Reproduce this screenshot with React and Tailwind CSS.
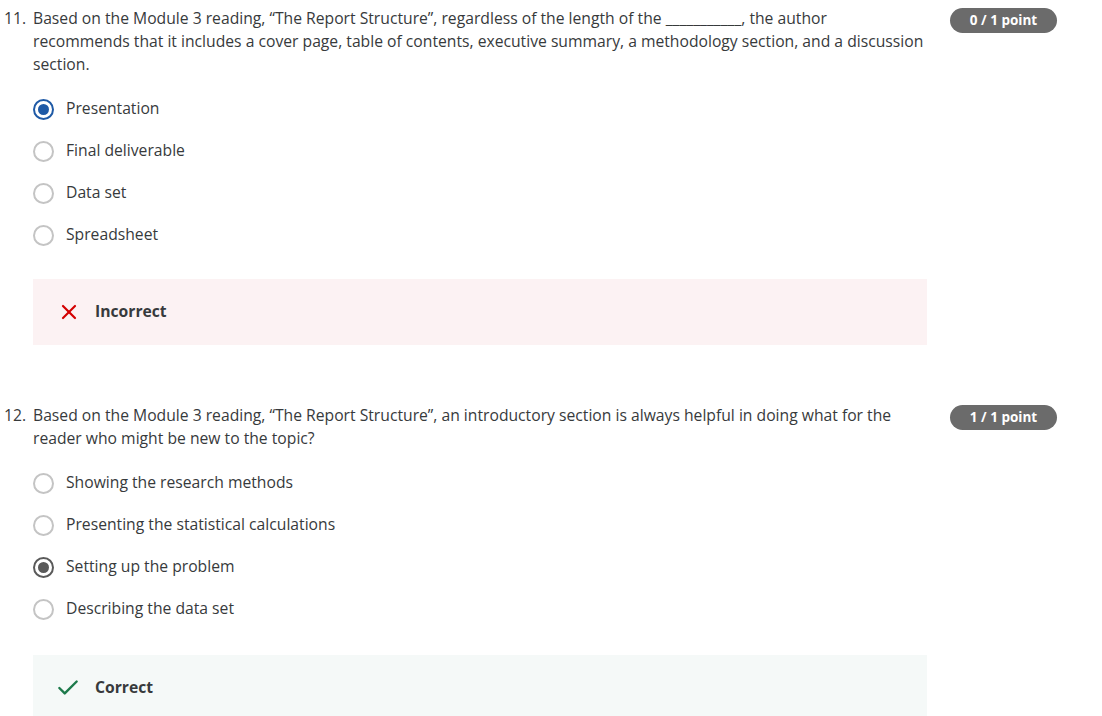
import { X, Check } from "lucide-react";

const questions = [
  {
    num: "11.",
    text: (
      <>
        Based on the Module 3 reading, “The Report Structure”, regardless of the length of the ___________, the author
        recommends that it includes a cover page, table of contents, executive summary, a methodology section, and a discussion
        section.
      </>
    ),
    points: "0 / 1 point",
    options: ["Presentation", "Final deliverable", "Data set", "Spreadsheet"],
    selected: 0,
    tone: "blue",
    correct: false,
  },
  {
    num: "12.",
    text: (
      <>
        Based on the Module 3 reading, “The Report Structure”, an introductory section is always helpful in doing what for the
        reader who might be new to the topic?
      </>
    ),
    points: "1 / 1 point",
    options: [
      "Showing the research methods",
      "Presenting the statistical calculations",
      "Setting up the problem",
      "Describing the data set",
    ],
    selected: 2,
    tone: "gray",
    correct: true,
  },
];

const Radio = ({ checked, tone }) => {
  if (!checked) {
    return <span className="w-[21px] h-[21px] rounded-full border-2 border-[#c4c4c4] bg-white shrink-0" />;
  }
  const ring = tone === "blue" ? "border-[#1f5aa6]" : "border-[#5a5a5a]";
  const dot = tone === "blue" ? "bg-[#1f5aa6]" : "bg-[#5a5a5a]";
  return (
    <span className={`w-[21px] h-[21px] rounded-full border-[2.5px] ${ring} bg-white shrink-0 flex items-center justify-center`}>
      <span className={`w-[11px] h-[11px] rounded-full ${dot}`} />
    </span>
  );
};

const Question = ({ q, first }) => (
  <div className={`flex ${first ? "pt-[7px]" : "pt-[59px]"}`}>
    <div className="w-[923px] shrink-0">
      {/* Prompt */}
      <div className="flex text-[15.7px] leading-[23px] text-[#373a3c]">
        <span className="w-[29px] shrink-0">{q.num}</span>
        <p className="flex-1">{q.text}</p>
      </div>

      {/* Options */}
      <div className="mt-[12px] pl-[29px]">
        {q.options.map((opt, i) => (
          <div key={opt} className="flex items-center h-[42px] gap-[12px]">
            <Radio checked={i === q.selected} tone={q.tone} />
            <span className="text-[15.7px] text-[#373a3c]">{opt}</span>
          </div>
        ))}
      </div>

      {/* Feedback */}
      <div
        className={`ml-[29px] h-[66px] flex items-center pl-[24px] gap-[14px] ${
          q.correct ? "mt-[25px] bg-[#f5f9f8]" : "mt-[23px] bg-[#fcf2f3]"
        }`}
      >
        {q.correct ? (
          <Check size={26} strokeWidth={2.2} className="text-[#1d7a4b] -ml-[2px]" />
        ) : (
          <X size={24} strokeWidth={2.2} className="text-[#d30000]" />
        )}
        <span className="text-[15.7px] font-bold text-[#373a3c]">{q.correct ? "Correct" : "Incorrect"}</span>
      </div>
    </div>

    {/* Points badge */}
    <div className="ml-[23px]">
      <span className="inline-flex items-center justify-center w-[107px] h-[25px] rounded-full bg-[#6b6b6b] text-white text-[13.5px] font-bold mt-[1px]">
        {q.points}
      </span>
    </div>
  </div>
);

export default function App() {
  return (
    <div className="min-h-screen bg-white pl-[4px] font-['Open_Sans',sans-serif]">
      {questions.map((q, i) => (
        <Question key={q.num} q={q} first={i === 0} />
      ))}
    </div>
  );
}
